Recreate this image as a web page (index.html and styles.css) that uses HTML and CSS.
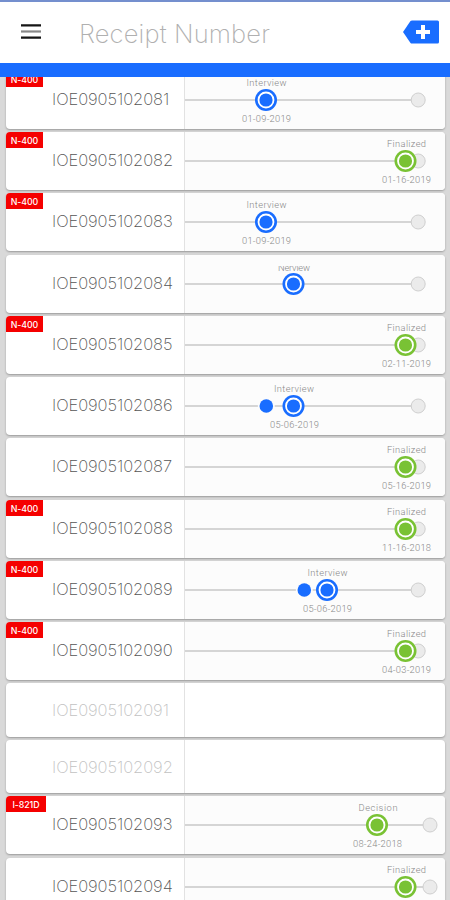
FILE: index.html
```html
<!DOCTYPE html>
<html lang="en">
<head>
<meta charset="utf-8">
<title>Receipts</title>
<link rel="stylesheet" href="styles.css">
</head>
<body>
<svg class="defs" width="0" height="0">
  <defs>
    <g id="rail"><path class="rail" d="M0 29H229"/><circle class="end" cx="233.2" cy="29" r="7"/></g>
    <g id="active"><circle r="11"/><circle class="ring" r="7.5"/></g>
  </defs>
</svg>
<header class="topbar">
  <svg class="menu" width="20" height="16" viewBox="0 0 20 16"><path d="M0 1.3H20M0 13.700H20"/><path class="mid" d="M0 7.500H20"/></svg>
  <span class="search">Receipt Number</span>
  <svg class="add" width="38" height="24" viewBox="0 0 38 24"><path class="tag" d="M1 12 8.5 1Q9 .5 10 .5H35.5Q37 .5 37 2V22Q37 23.500 35.500 23.500H10Q9 23.500 8.500 23Z"/><path class="plus" d="M14 12H28M21 5V19"/></svg>
</header>
<main class="list">
  <article class="card"><div class="id"><b class="badge">N-400</b><span>IOE0905102081</span></div>
    <svg class="track" viewBox="0 0 260 58"><use href="#rail"/><use class="blue" href="#active" x="81" y="29"/><text x="81.500" y="14.600" textLength="40">Interview</text><text x="81.500" y="51" textLength="49">01-09-2019</text></svg></article>
  <article class="card"><div class="id"><b class="badge">N-400</b><span>IOE0905102082</span></div>
    <svg class="track" viewBox="0 0 260 58"><use href="#rail"/><use class="green" href="#active" x="220.500" y="29"/><text x="221.500" y="14.600" textLength="39">Finalized</text><text x="221.500" y="51" textLength="49">01-16-2019</text></svg></article>
  <article class="card"><div class="id"><b class="badge">N-400</b><span>IOE0905102083</span></div>
    <svg class="track" viewBox="0 0 260 58"><use href="#rail"/><use class="blue" href="#active" x="81" y="29"/><text x="81.500" y="14.600" textLength="40">Interview</text><text x="81.500" y="51" textLength="49">01-09-2019</text></svg></article>
  <article class="card"><div class="id"><span>IOE0905102084</span></div>
    <svg class="track" viewBox="0 0 260 58"><use href="#rail"/><use class="blue" href="#active" x="108.500" y="29"/><svg y="11" width="260" height="8"><text x="109" y="4.500" textLength="32">Nerview</text></svg></svg></article>
  <article class="card"><div class="id"><b class="badge">N-400</b><span>IOE0905102085</span></div>
    <svg class="track" viewBox="0 0 260 58"><use href="#rail"/><use class="green" href="#active" x="220.500" y="29"/><text x="221.500" y="14.600" textLength="39">Finalized</text><text x="221.500" y="51" textLength="49">02-11-2019</text></svg></article>
  <article class="card"><div class="id"><span>IOE0905102086</span></div>
    <svg class="track" viewBox="0 0 260 58"><use href="#rail"/><circle class="gap" cx="81.300" cy="29" r="8.500"/><circle class="blue" cx="81.300" cy="29" r="6.800"/><use class="blue" href="#active" x="108.500" y="29"/><text x="109" y="14.600" textLength="40">Interview</text><text x="109.500" y="51" textLength="49">05-06-2019</text></svg></article>
  <article class="card"><div class="id"><span>IOE0905102087</span></div>
    <svg class="track" viewBox="0 0 260 58"><use href="#rail"/><use class="green" href="#active" x="220.500" y="29"/><text x="221.500" y="14.600" textLength="39">Finalized</text><text x="221.500" y="51" textLength="49">05-16-2019</text></svg></article>
  <article class="card"><div class="id"><b class="badge">N-400</b><span>IOE0905102088</span></div>
    <svg class="track" viewBox="0 0 260 58"><use href="#rail"/><use class="green" href="#active" x="220.500" y="29"/><text x="221.500" y="14.600" textLength="39">Finalized</text><text x="221.500" y="51" textLength="49">11-16-2018</text></svg></article>
  <article class="card"><div class="id"><b class="badge">N-400</b><span>IOE0905102089</span></div>
    <svg class="track" viewBox="0 0 260 58"><use href="#rail"/><circle class="gap" cx="119.300" cy="29" r="8.500"/><circle class="blue" cx="119.300" cy="29" r="6.800"/><use class="blue" href="#active" x="142" y="29"/><text x="142.500" y="14.600" textLength="40">Interview</text><text x="142.500" y="51" textLength="49">05-06-2019</text></svg></article>
  <article class="card"><div class="id"><b class="badge">N-400</b><span>IOE0905102090</span></div>
    <svg class="track" viewBox="0 0 260 58"><use href="#rail"/><use class="green" href="#active" x="220.500" y="29"/><text x="221.500" y="14.600" textLength="39">Finalized</text><text x="221.500" y="51" textLength="49">04-03-2019</text></svg></article>
  <article class="card empty"><div class="id"><span>IOE0905102091</span></div></article>
  <article class="card empty"><div class="id"><span>IOE0905102092</span></div></article>
  <article class="card"><div class="id"><b class="badge wide">I-821D</b><span>IOE0905102093</span></div>
    <svg class="track" viewBox="0 0 260 58"><path class="rail" d="M0 29H240"/><circle class="end" cx="245" cy="29" r="7"/><use class="green" href="#active" x="192" y="29"/><text x="193" y="14.600" textLength="39">Decision</text><text x="192.500" y="51" textLength="49">08-24-2018</text></svg></article>
  <article class="card"><div class="id"><span>IOE0905102094</span></div>
    <svg class="track" viewBox="0 0 260 58"><path class="rail" d="M0 29H240"/><circle class="end" cx="245" cy="29" r="7"/><use class="green" href="#active" x="220.500" y="29"/><text x="221.500" y="14.600" textLength="39">Finalized</text></svg></article>
</main>
</body>
</html>
```
FILE: styles.css
```css
* { box-sizing: border-box; }
body {
  margin: 0;
  height: 900px;
  overflow: hidden;
  display: flex;
  flex-direction: column;
  background: #d9d9d9;
  font-family: Inter, "Liberation Sans", sans-serif;
}
.defs { display: block; flex: none; height: 0; }
.topbar {
  flex: none;
  height: 77px;
  display: flex;
  align-items: center;
  padding: 0 10px 1px 21px;
  border-top: 2px solid #748fce;
  border-bottom: 14px solid #196dff;
  background: #fff;
}
.menu { fill: none; stroke: #151515; stroke-width: 2.2; }
.menu .mid { stroke: #888; }
.search {
  flex: 1;
  margin: 2px 0 0 38px;
  font-size: 25.5px;
  font-weight: 200;
  letter-spacing: 0.15px;
  color: #b0b0b0;
}
.tag { fill: #196dff; }
.plus { fill: none; stroke: #fff; stroke-width: 4; }
.list {
  flex: 1;
  min-height: 0;
  overflow: hidden;
  display: flex;
  flex-direction: column;
  gap: 3.2px;
  padding: 0 5px 0 6px;
}
.card {
  flex: none;
  height: 58.05px;
  display: flex;
  border-radius: 4px;
  background: #fff;
  overflow: hidden;
  box-shadow: 0 1px 2px #999;
}
.card:first-child { margin-top: -6.1px; }
.id {
  position: relative;
  width: 179px;
  flex: none;
  display: flex;
  align-items: center;
  padding: 0 0 2px 46px;
  border-right: 1px solid #e2e2e2;
  font-size: 16.5px;
  font-weight: 200;
  letter-spacing: -0.07px;
  color: #555;
}
.badge {
  position: absolute;
  top: 0;
  left: 0;
  width: 37px;
  height: 16px;
  line-height: 17px;
  text-align: center;
  background: #f50000;
  color: #fff;
  font-size: 8.8px;
  font-weight: 500;
  letter-spacing: -0.1px;
}
.wide { width: 40px; }
.empty { height: 53.4px; }
.empty .id { color: #c2c2c2; padding-bottom: 0; }
.track {
  flex: none;
  width: 260px;
  height: 58px;
  background: #fcfcfc;
}
.track text {
  font-family: Roboto, sans-serif;
  font-size: 9.3px;
  font-weight: 300;
  fill: #888;
  text-anchor: middle;
}
.rail { fill: none; stroke: #c9c9c9; stroke-width: 1.6; }
.end { fill: #ebebeb; stroke: #cfcfcf; stroke-width: 1; }
.gap { fill: #fcfcfc; }
.ring { stroke: #fff; stroke-width: 1.8; }
.blue { fill: #196dff; }
.green { fill: #79c234; }
```
